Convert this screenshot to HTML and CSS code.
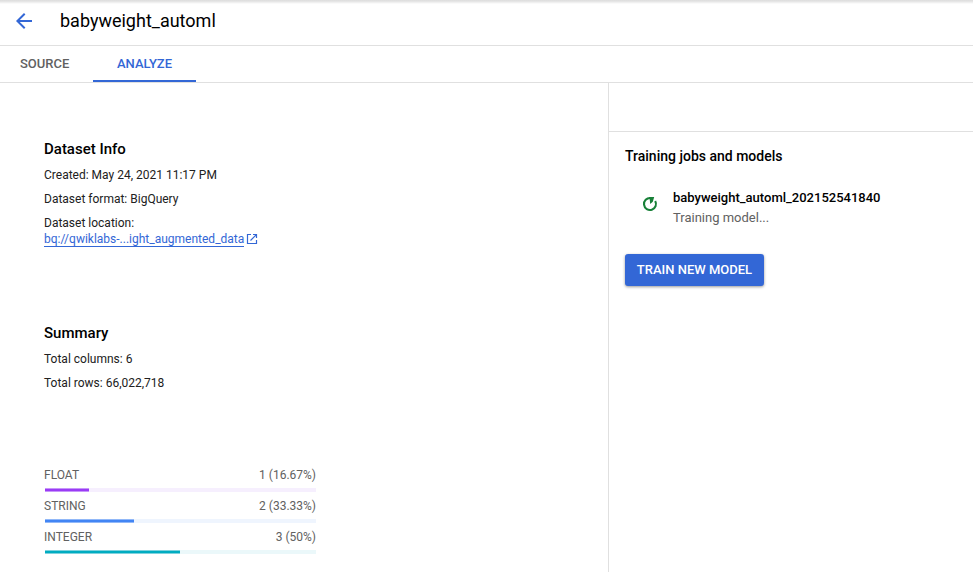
FILE: index.html
```html
<!DOCTYPE html>
<html lang="en">
<head>
<meta charset="utf-8">
<title>babyweight_automl</title>
<link rel="stylesheet" href="styles.css">
</head>
<body>
<header class="topbar">
  <svg class="back" viewBox="0 0 24 24" width="24" height="24"><path d="M20 11H7.83l5.59-5.59L12 4l-8 8 8 8 1.41-1.41L7.83 13H20z"/></svg>
  <h1>babyweight_automl</h1>
</header>
<nav class="tabs">
  <a class="tab source">SOURCE</a>
  <a class="tab active">ANALYZE</a>
</nav>
<main class="content">
  <section class="details">
    <div class="info">
      <h2>Dataset Info</h2>
      <p>Created: May 24, 2021 11:17 PM</p>
      <p>Dataset format: BigQuery</p>
      <p>Dataset location:</p>
      <a class="link"><span>bq://qwiklabs-...ight_augmented_data</span><svg viewBox="0 0 12 12" width="12" height="12"><path d="M5 1.5H1.5v9h9V7M7 1.5h3.5V5M10.5 1.5L4.5 7.5"/></svg></a>
    </div>
    <div class="summary">
      <h2>Summary</h2>
      <p>Total columns: 6</p>
      <p>Total rows: 66,022,718</p>
    </div>
    <div class="types">
      <div class="row"><span>FLOAT</span><span>1 (16.67%)</span></div>
      <div class="bar purple"><div class="fill" style="width:calc(16.67% - 1px)"></div></div>
      <div class="row"><span>STRING</span><span>2 (33.33%)</span></div>
      <div class="bar blue"><div class="fill" style="width:calc(33.33% - 1px)"></div></div>
      <div class="row"><span>INTEGER</span><span>3 (50%)</span></div>
      <div class="bar teal"><div class="fill" style="width:calc(50% - 1px)"></div></div>
    </div>
  </section>
  <aside class="side">
    <div class="spacer"></div>
    <h2>Training jobs and models</h2>
    <div class="job">
      <svg viewBox="0 0 16 16" width="16" height="16"><path class="ring" d="M8.5 2A6 6 0 1 0 13.2 5"/><path class="wedge" d="M7 1h5.2L10.8 5.8 8.2 8 7.8 4z"/></svg>
      <div><strong>babyweight_automl_202152541840</strong><span>Training model...</span></div>
    </div>
    <button>TRAIN NEW MODEL</button>
  </aside>
</main>
</body>
</html>
```
FILE: styles.css
```css
* { box-sizing: border-box; }
body { margin: 0; height: 572px; overflow: hidden; display: flex; flex-direction: column; background: #fff; color: #212121; font: 12px/16px Roboto, sans-serif; }
h1, h2, p { margin: 0; }
.topbar { height: 46px; display: flex; align-items: center; padding: 0 12px 4px; border-bottom: 1px solid #e0e0e0; background: linear-gradient(#dcdcdc, #e6e6e6 1.5px, #fff 4px); }
.back { fill: #3367d6; margin-right: 24px; }
h1 { font-size: 18px; line-height: 24px; font-weight: 400; color: #000; }
.tabs { height: 37px; display: flex; border-bottom: 1px solid #e0e0e0; }
.tab { font-size: 13px; font-weight: 500; line-height: 36px; color: #616161; }
.source { width: 93px; padding-left: 20px; }
.active { width: 103px; text-align: center; color: #3367d6; border-bottom: 2px solid #3367d6; }
.content { flex: 1; display: flex; }
.details { width: 608px; padding: 56px 44px 0; }
h2 { font-size: 15px; line-height: 20px; font-weight: 500; color: #000; }
.info { height: 184px; }
.summary { height: 144px; }
p { margin-top: 8px; }
.link { display: flex; align-items: center; height: 16px; color: #3367d6; }
.link span { height: 16px; line-height: 16px; border-bottom: 1px solid #3367d6; }
.link svg { margin-left: 2px; fill: none; stroke: #3367d6; stroke-width: 1.2; }
.types { width: 272px; color: #616161; }
.row { display: flex; justify-content: space-between; height: 21px; }
.bar { height: 4px; margin: 0 0 6px 1px; }
.fill { height: 4px; border: solid; border-width: 1px 0; }
.purple { background: #f6effe; }
.purple .fill { background: #9a3bf5; border-color: #c795fa; }
.blue { background: #eff5fe; }
.blue .fill { background: #4285f4; border-color: #91b8f8; }
.teal { background: #ebf8fa; }
.teal .fill { background: #00acc1; border-color: #7fd2dd; }
.side { flex: 1; border-left: 1px solid #e0e0e0; }
.spacer { height: 49px; border-bottom: 1px solid #e0e0e0; }
.side h2 { margin: 14px 0 0 16px; font-size: 14px; }
.job { display: flex; margin: 22px 0 0 33px; }
.job svg { margin: 8px 15px 0 0; }
.ring { fill: none; stroke: #188038; stroke-width: 2.1; }
.wedge { fill: #188038; }
.job strong, .job span { display: block; line-height: 20px; font-size: 13px; }
.job strong { font-weight: 500; color: #000; }
.job span { color: #616161; }
button { display: block; width: 139px; height: 32px; margin: 26px 0 0 16px; padding: 0; border: 0; border-radius: 3px; background: #3367d6; color: #fff; font: 500 13px/32px Roboto, sans-serif; box-shadow: 0 1px 3px #0006; }
```
